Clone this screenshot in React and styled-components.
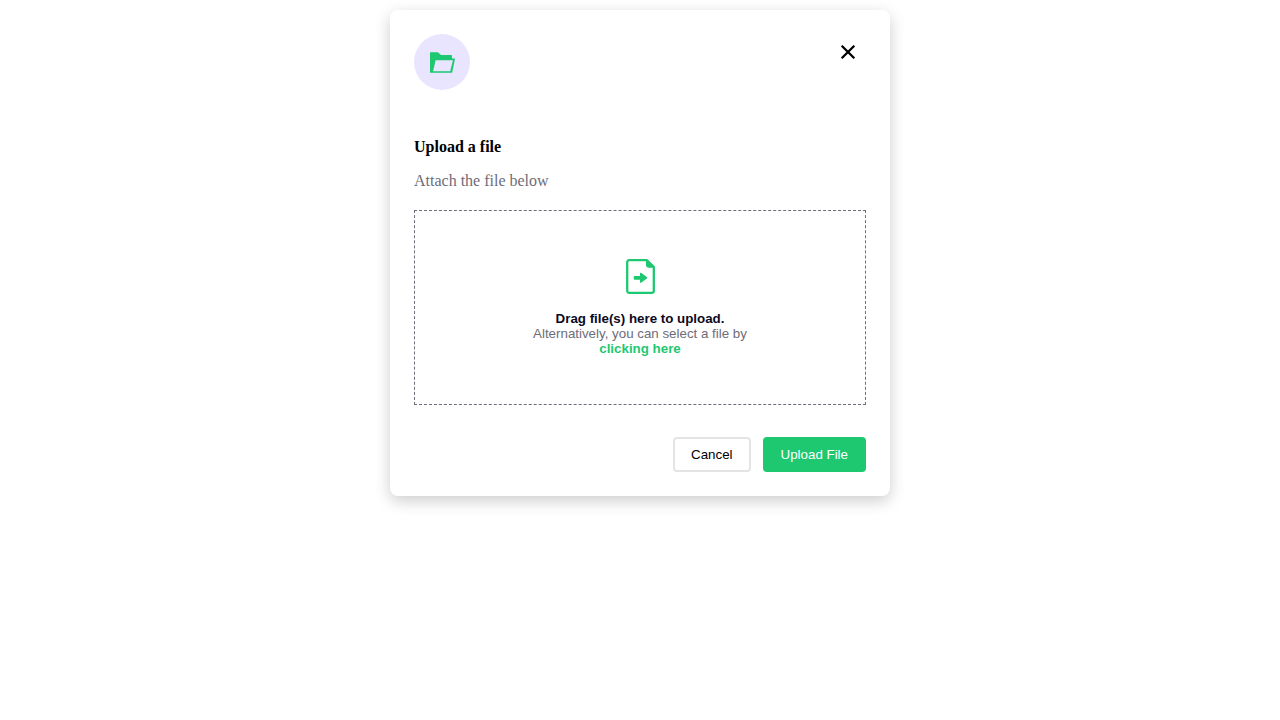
import React from "react";
import styled, { createGlobalStyle } from "styled-components";

const GlobalStyle = createGlobalStyle`
  *, *::before, *::after {
    box-sizing: border-box;
  }
  body {
    margin: 0;
    background: #fff;
    font-family: "Liberation Serif", serif;
    font-size: 16px;
    line-height: 18px;
  }
`;

const Page = styled.main`
  display: flex;
  justify-content: center;
  align-items: flex-start;
  min-height: 100vh;
  padding: 10px;
`;

const Card = styled.section`
  width: 100%;
  max-width: 500px;
  padding: 24px;
  border-radius: 8px;
  background: #fff;
  box-shadow: 0 5px 16px rgba(0, 0, 0, 0.2);
`;

const Header = styled.header`
  display: flex;
  justify-content: space-between;
  align-items: flex-start;
  margin-bottom: 48px;
`;

const IconCircle = styled.div`
  display: flex;
  align-items: center;
  justify-content: center;
  width: 56px;
  height: 56px;
  border-radius: 50%;
  background: #e9e5ff;
`;

const CloseButton = styled.button`
  display: flex;
  align-items: center;
  justify-content: center;
  width: 36px;
  height: 36px;
  padding: 0;
  border: 0;
  background: transparent;
  color: #000;
  cursor: pointer;
`;

const Title = styled.h2`
  margin: 0 0 16px;
  font-size: 16px;
  font-weight: 700;
  color: #000;
`;

const Subtitle = styled.p`
  margin: 0 0 20px;
  color: #6d6d79;
`;

const DropZone = styled.button`
  display: flex;
  flex-direction: column;
  align-items: center;
  width: 100%;
  padding: 48px;
  border: 1px dashed #6d6d79;
  background: transparent;
  font-family: "Liberation Sans", sans-serif;
  line-height: 15px;
  color: #6d6d79;
  cursor: pointer;

  svg {
    margin-bottom: 16px;
  }
`;

const DropText = styled.span`
  color: ${({ $tone }) => $tone};
  font-weight: ${({ $bold }) => ($bold ? 700 : 400)};
`;

const Actions = styled.footer`
  display: flex;
  justify-content: flex-end;
  gap: 12px;
  margin-top: 32px;
`;

const ActionButton = styled.button`
  padding: 8px 16px;
  border: 2px solid ${({ $primary }) => ($primary ? "#1ec871" : "#e4e4e4")};
  border-radius: 4px;
  background: ${({ $primary }) => ($primary ? "#1ec871" : "#fff")};
  font-family: "Liberation Sans", sans-serif;
  line-height: 15px;
  color: ${({ $primary }) => ($primary ? "#fff" : "#000")};
  cursor: pointer;
`;

const FolderIcon = () => (
  <svg width="28" height="28" viewBox="0 0 28 28" aria-hidden="true">
    <path
      fill="#1ec871"
      fillRule="evenodd"
      d="M2 4.300h7.400q.6 0 1.100.5l2.500 2.200h10.300q.7 0 .7.700v2.700h3.100L24.100 24.700H2zM7.600 12.200L5.100 23.200h17.100L24.900 12.200z"
    />
  </svg>
);

const CloseIcon = () => (
  <svg width="24" height="24" viewBox="0 0 24 24" aria-hidden="true">
    <path d="M5.700 5.700L18.300 18.300M18.300 5.700L5.700 18.300" stroke="currentColor" strokeWidth="2.300" />
  </svg>
);

const FileIcon = () => (
  <svg width="30" height="36" viewBox="0 0 30 36" aria-hidden="true">
    <path
      d="M21.800 1.200H4.200a2 2 0 0 0-2 2v28.600a2 2 0 0 0 2 2h22.600a2 2 0 0 0 2-2V8z"
      fill="none"
      stroke="#1ec871"
      strokeWidth="2.300"
      strokeLinejoin="round"
    />
    <path d="M21 .5V6.300a2.400 2.400 0 0 0 2.400 2.400h6.200V7.800L22.200.3z" fill="#1ec871" />
    <path
      d="M9.900 16.900h5.100v-2.300q0-1.500 1.400-.6l5.400 4q1 .8 0 1.600l-5.400 4q-1.400.9-1.400-.6v-2.300H9.900q-1.200 0-1.200-1.200v-1.400q0-1.200 1.200-1.200z"
      fill="#1ec871"
    />
  </svg>
);

export default function App() {
  return (
    <>
      <GlobalStyle />
      <Page>
        <Card aria-labelledby="upload-title">
          <Header>
            <IconCircle>
              <FolderIcon />
            </IconCircle>
            <CloseButton type="button" aria-label="Close">
              <CloseIcon />
            </CloseButton>
          </Header>
          <Title id="upload-title">Upload a file</Title>
          <Subtitle>Attach the file below</Subtitle>
          <DropZone type="button">
            <FileIcon />
            <DropText $bold $tone="#0b0a1f">Drag file(s) here to upload.</DropText>
            <DropText $tone="#6d6d79">Alternatively, you can select a file by</DropText>
            <DropText $bold $tone="#1ec871">clicking here</DropText>
          </DropZone>
          <Actions>
            <ActionButton type="button">Cancel</ActionButton>
            <ActionButton type="button" $primary>
              Upload File
            </ActionButton>
          </Actions>
        </Card>
      </Page>
    </>
  );
}
